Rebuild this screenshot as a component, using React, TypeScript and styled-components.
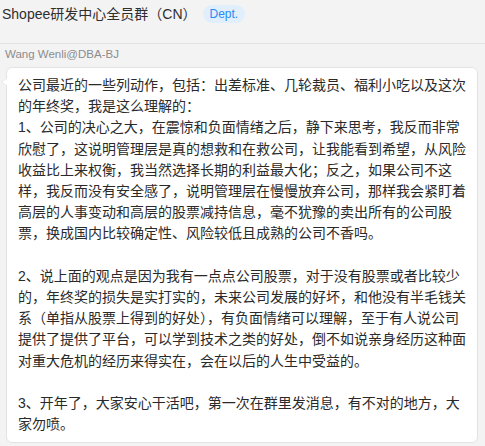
import React from "react";
import styled, { createGlobalStyle } from "styled-components";

const GlobalStyle = createGlobalStyle`
  html, body {
    margin: 0;
    padding: 0;
    background: #f3f3f4;
  }
  body {
    font-family: "Liberation Sans", "Noto Sans CJK SC", sans-serif;
    color: #333;
  }
`;

const Page = styled.div`
  width: 485px;
  height: 446px;
  overflow: hidden;
  background: #f3f3f4;
`;

const Header = styled.header`
  height: 44px;
  box-sizing: border-box;
  display: flex;
  align-items: center;
  gap: 6px;
  padding: 0 0 15px 2px;
  border-bottom: 1px solid #e2e2e4;
`;

const Title = styled.h1`
  margin: 0;
  font-size: 14px;
  font-weight: 400;
  line-height: 20px;
  color: #2e2e2e;
  font-family: "Liberation Sans", "Noto Sans CJK SC", sans-serif;
`;

const Badge = styled.span`
  display: inline-flex;
  align-items: center;
  height: 18px;
  padding: 0 7px;
  border-radius: 9px;
  background: #e1effd;
  color: #2a8bf2;
  font-size: 12px;
  font-family: "Liberation Sans", sans-serif;
`;

const Message = styled.section`
  display: flex;
  flex-direction: column;
  padding: 2px 0 0 0;
`;

const Sender = styled.div`
  font-size: 11.5px;
  line-height: 16px;
  color: #8c8c8c;
  padding-left: 5px;
  margin-bottom: 5px;
`;

const Bubble = styled.div`
  position: relative;
  margin-left: 6px;
  width: 472px;
  box-sizing: border-box;
  padding: 7px 11px 7px 11px;
  background: #fff;
  border: 1px solid #e3e3e5;
  border-radius: 6px;

  &::before {
    content: "";
    position: absolute;
    left: -6px;
    top: 10px;
    border-style: solid;
    border-width: 4px 6px 4px 0;
    border-color: transparent #e3e3e5 transparent transparent;
  }
  &::after {
    content: "";
    position: absolute;
    left: -5px;
    top: 10px;
    border-style: solid;
    border-width: 4px 6px 4px 0;
    border-color: transparent #fff transparent transparent;
  }
`;

const Body = styled.p`
  margin: 0;
  width: 448px;
  font-size: 14px;
  line-height: 21.2px;
  color: #2a2a2a;
  white-space: pre-wrap;
  font-family: "Liberation Sans", "Noto Sans CJK SC", sans-serif;
`;

const text = `公司最近的一些列动作，包括：出差标准、几轮裁员、福利小吃以及这次的年终奖，我是这么理解的：
1、公司的决心之大，在震惊和负面情绪之后，静下来思考，我反而非常欣慰了，这说明管理层是真的想救和在救公司，让我能看到希望，从风险收益比上来权衡，我当然选择长期的利益最大化；反之，如果公司不这样，我反而没有安全感了，说明管理层在慢慢放弃公司，那样我会紧盯着高层的人事变动和高层的股票减持信息，毫不犹豫的卖出所有的公司股票，换成国内比较确定性、风险较低且成熟的公司不香吗。

2、说上面的观点是因为我有一点点公司股票，对于没有股票或者比较少的，年终奖的损失是实打实的，未来公司发展的好坏，和他没有半毛钱关系（单指从股票上得到的好处），有负面情绪可以理解，至于有人说公司提供了提供了平台，可以学到技术之类的好处，倒不如说亲身经历这种面对重大危机的经历来得实在，会在以后的人生中受益的。

3、开年了，大家安心干活吧，第一次在群里发消息，有不对的地方，大家勿喷。`;

export default function App() {
  return (
    <Page>
      <GlobalStyle />
      <Header>
        <Title>Shopee研发中心全员群（CN）</Title>
        <Badge>Dept.</Badge>
      </Header>
      <Message>
        <Sender>Wang Wenli@DBA-BJ</Sender>
        <Bubble>
          <Body>{text}</Body>
        </Bubble>
      </Message>
    </Page>
  );
}
